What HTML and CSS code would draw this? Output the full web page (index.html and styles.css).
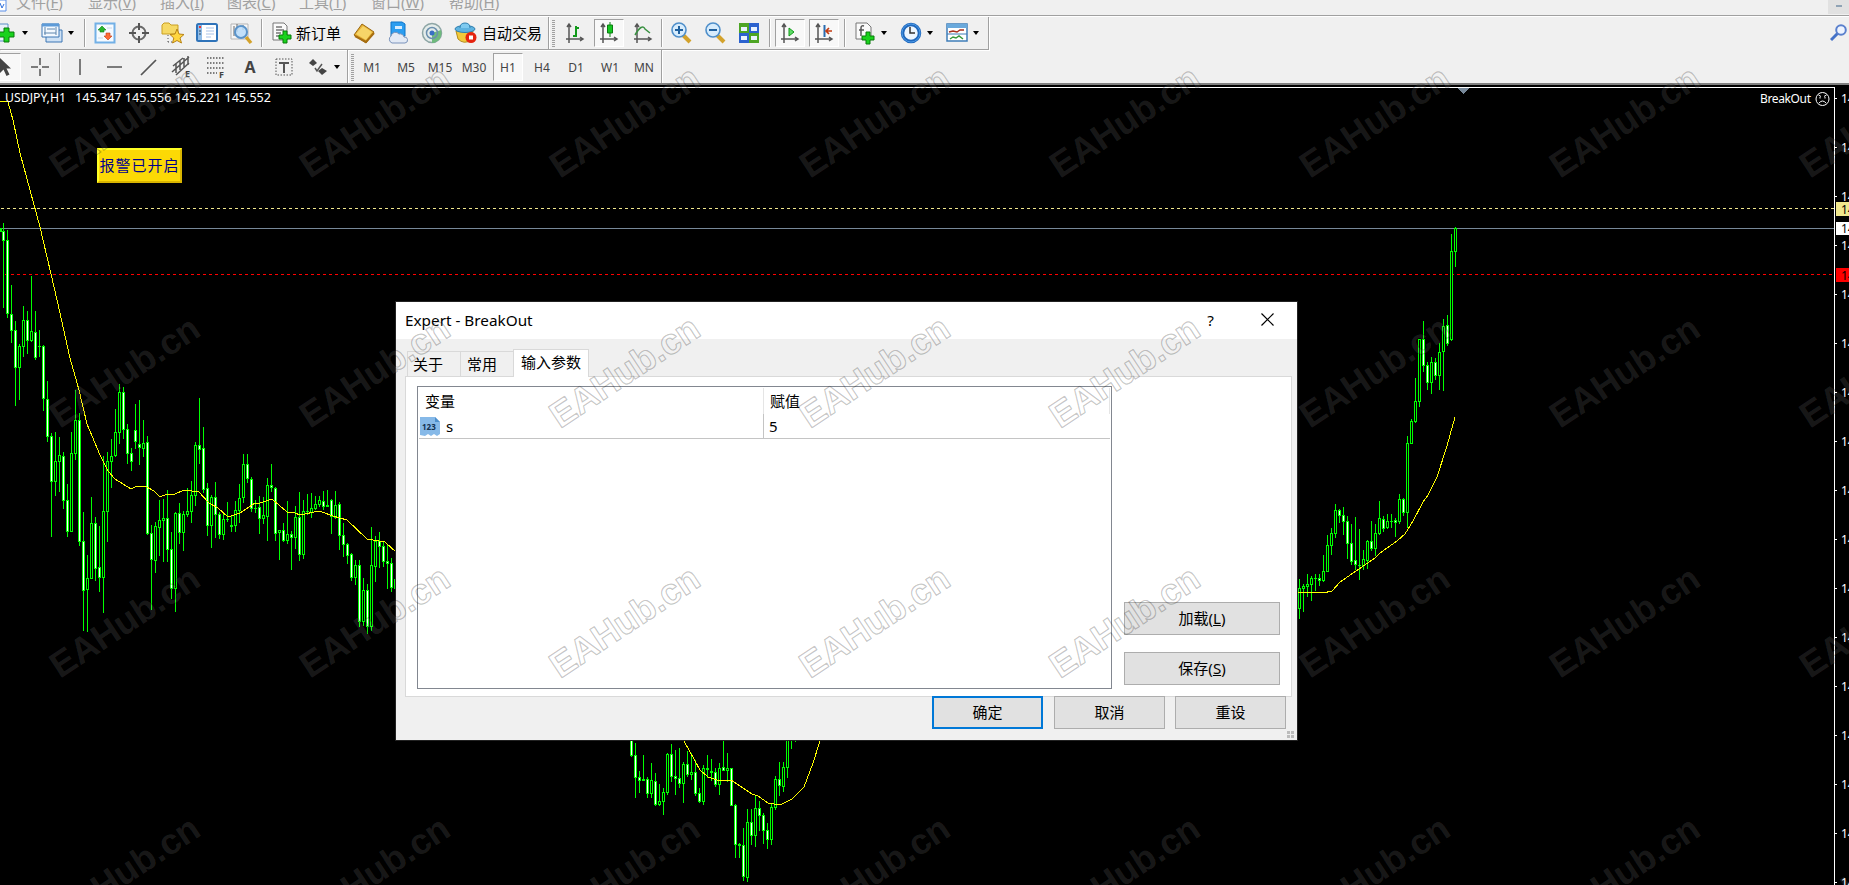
FILE: index.html
```html
<!DOCTYPE html>
<html lang="zh-CN">
<head>
	<meta charset="UTF-8">
	<title>USDJPY,H1</title>
	<link rel="stylesheet" href="styles.css">
</head>
<body>
	<div class="menu">
		<svg class="menu-logo" width="7" height="12" viewBox="0 0 7 12"><path d="M0 0h6v11H0" fill="#fff" stroke="#5b8fe8"/><path d="M0 3l2 5 2-4" fill="none" stroke="#2f6fdc"/></svg>
		<span>文件(<u>F</u>)</span>
		<span>显示(<u>V</u>)</span>
		<span class="short">插入(<u>I</u>)</span>
		<span>图表(<u>C</u>)</span>
		<span>工具(<u>T</u>)</span>
		<span class="long">窗口(<u>W</u>)</span>
		<span>帮助(<u>H</u>)</span>
		<div class="min"></div>
	</div>

	<div class="bar">
		<div class="group">
			<div class="btn first"><svg width="22" height="22"><path d="M0 2h13v17H0z" fill="#e8f1fa" stroke="#5b8fc4"/><path d="M9 6h5v4h5v5h-5v5H9v-5H4v-5h5z" fill="#19d21c" stroke="#087a0a"/></svg></div>
			<i class="dd"></i>
			<div class="btn"><svg width="22" height="22"><path d="M5 8h16v12H5z" fill="#cfe2f5" stroke="#3c76b4"/><path d="M1 2h17v13H1z" fill="#f3f9ff" stroke="#3c76b4"/><path d="M1 3h17" stroke="#5d9bd8" stroke-width="3"/><path d="M4 5v8M15 5v8M3 11h12M6 7h8" stroke="#5f86ad" fill="none"/></svg></div>
			<i class="dd"></i>
			<i class="sep"></i>
			<div class="btn"><svg width="22" height="22"><path d="M1.500 1.500h19v19h-19z" fill="#f5faff" stroke="#72b0e6" stroke-width="2"/><path d="M8 4l4 4h-2v2H6V8H4z" fill="#26b52b" stroke="#11821a" stroke-width=".6"/><path d="M14 18l4-4h-2v-3h-4v3h-2z" fill="#ff6b35" stroke="#c03a10" stroke-width=".6"/><path d="M4 16h5M13 6h5" stroke="#c9d9e8"/></svg></div>
			<div class="btn"><svg width="22" height="22"><circle cx="11" cy="11" r="6.500" fill="none" stroke="#6a6a6a" stroke-width="2"/><path d="M11 1v7M11 14v7M1 11h7M14 11h7" stroke="#555" stroke-width="2"/></svg></div>
			<div class="btn"><svg width="24" height="22"><path d="M1 3l2-2h5l2 2h7v9H1z" fill="#f6d965" stroke="#c99f22"/><path d="M7 13v8M7 20h5" stroke="#555" stroke-dasharray="1 2"/><path d="M16 7l2 5 5 .5-4 3.500 1.500 5L16 18.500 11.500 21l1.300-5L9 12.500l5-.5z" fill="#ffd640" stroke="#b88316"/></svg></div>
			<div class="btn"><svg width="22" height="20"><rect x="1" y="1" width="20" height="17" rx="1.500" fill="#fff" stroke="#2f73b9" stroke-width="2"/><path d="M2 2h4v15H2z" fill="#8fbce8"/><path d="M10 5h8M10 8h8M10 11h8M10 14h5" stroke="#a9c3e8"/><path d="M3 4h2" stroke="#e33" stroke-width="2"/><path d="M3 8h2M3 11h2" stroke="#345"/></svg></div>
			<div class="btn"><svg width="23" height="23"><path d="M1 2h17v15H1z" fill="#f7f7f7" stroke="#b5b5b5"/><path d="M4 4v10M7 2v8M13 3v5" stroke="#666"/><circle cx="11" cy="10" r="6" fill="#b9dcfa" fill-opacity=".85" stroke="#5a93c9" stroke-width="2"/><path d="M16 15l5 6" stroke="#d3a22b" stroke-width="3.500"/></svg></div>
			<i class="sep"></i>
			<div class="btn"><svg width="22" height="24"><path d="M2 2h11l3 3v14H2z" fill="#fafafa" stroke="#777"/><path d="M5 6h6M5 9h8M5 12h5M5 15h5" stroke="#777" stroke-width="1.500"/><path d="M12 10h4v4h4v4h-4v4h-4v-4H8v-4h4z" fill="#19d21c" stroke="#087a0a"/></svg></div>
			<span class="label order">新订单</span>
			<div class="btn"><svg width="22" height="22"><path d="M1 13L9 2l12 8-8 11z" fill="#e6b034" stroke="#9a6710"/><path d="M3 12l7-8 9 6-6 8z" fill="#f6d468"/><path d="M2 14l11 6 8-9" fill="none" stroke="#a76e11" stroke-width="2"/></svg></div>
			<div class="btn"><svg width="22" height="24"><path d="M4 1h11l3 2v12H4z" fill="#2b9df0" stroke="#0f74c8"/><path d="M8 5h7v3H8z" fill="#d5ecff"/><path d="M5 22a4 4 0 0 1-1-7 4.500 4.500 0 0 1 8-2 4 4 0 0 1 5 3 3 3 0 0 1 1 6z" fill="#e3eaf5" stroke="#7a93bb"/></svg></div>
			<div class="btn"><svg width="23" height="22"><circle cx="11" cy="11" r="9.500" fill="#e4ecea" stroke="#8da5a5" stroke-width="1.500"/><path d="M11 11v10a10 10 0 0 0 9-13z" fill="#6fba7d"/><circle cx="11" cy="11" r="5.500" fill="none" stroke="#6b8fae" stroke-width="1.500"/><circle cx="11" cy="11" r="2.500" fill="#3a6fc4"/></svg></div>
			<div class="btn"><svg width="24" height="22"><path d="M2 9h17l-2 9q-7 5-13-1z" fill="#f1c93b" stroke="#b58a17"/><ellipse cx="11" cy="7" rx="10" ry="3.500" fill="#5eb3e0" stroke="#2f7fb0"/><path d="M6 6q0-5 5-5t5 5" fill="#7ecaf0" stroke="#2f7fb0"/><circle cx="17" cy="15.500" r="5.500" fill="#e5230f"/><path d="M15 13.500h4v4h-4z" fill="#fff"/></svg></div>
			<span class="label auto">自动交易</span>
		</div>
		<div class="group">
			<i class="grip"></i>
			<div class="btn"><svg width="20" height="22"><g fill="none" stroke="#555" stroke-width="1.500"><path d="M4 3v18M1 17h16M2 5l2-3 2 3M15 15l3 2-3 2"/></g><path d="M8 14h3V4M11 6h3" fill="none" stroke="#129a1b" stroke-width="2"/></svg></div>
			<div class="btn on"><svg width="20" height="22"><g fill="none" stroke="#555" stroke-width="1.500"><path d="M4 3v18M1 17h16M2 5l2-3 2 3M15 15l3 2-3 2"/></g><path d="M11 0v15" stroke="#0a7c12"/><path d="M8.500 3h5v8h-5z" fill="#16c721" stroke="#0a7c12"/></svg></div>
			<div class="btn"><svg width="20" height="22"><g fill="none" stroke="#555" stroke-width="1.500"><path d="M4 3v18M1 17h16M2 5l2-3 2 3M15 15l3 2-3 2"/></g><path d="M2 13q7-12 10-6l5 4" fill="none" stroke="#3a9142" stroke-width="1.500"/></svg></div>
			<i class="sep tight"></i>
			<div class="btn"><svg width="22" height="22"><path d="M13 13l7 7" stroke="#d3a22b" stroke-width="4"/><circle cx="9" cy="8" r="7" fill="#d7ecfc" stroke="#4f8fca" stroke-width="1.600"/><path d="M5 8h8M9 4v8" stroke="#20619f" stroke-width="2"/></svg></div>
			<div class="btn"><svg width="22" height="22"><path d="M13 13l7 7" stroke="#d3a22b" stroke-width="4"/><circle cx="9" cy="8" r="7" fill="#d7ecfc" stroke="#4f8fca" stroke-width="1.600"/><path d="M5 8h8" stroke="#20619f" stroke-width="2"/></svg></div>
			<div class="btn"><svg width="22" height="22"><path d="M1 1h10v10H1zM11 11h10v10H11z" fill="#4da524"/><path d="M11 1h10v10H11zM1 11h10v10H1z" fill="#2c62cf"/><path d="M3 5h6v4H3zM13 5h6v4h-6zM3 14h6v4H3zM13 14h6v4h-6z" fill="#e9f3ff"/></svg></div>
			<i class="sep"></i>
			<div class="btn on"><svg width="20" height="22"><g fill="none" stroke="#555" stroke-width="1.500"><path d="M4 3v18M1 17h16M2 5l2-3 2 3M15 15l3 2-3 2"/></g><path d="M9 6l5 4-5 4z" fill="#5fdc67" stroke="#129a1b"/></svg></div>
			<div class="btn on"><svg width="20" height="22"><g fill="none" stroke="#555" stroke-width="1.500"><path d="M4 3v18M1 17h16M2 5l2-3 2 3M15 15l3 2-3 2"/></g><path d="M10.500 3v12" stroke="#2a6db0" stroke-width="2"/><path d="M18 9h-6M15 6l-3 3 3 3" fill="none" stroke="#c23b12" stroke-width="1.700"/></svg></div>
			<i class="sep"></i>
			<div class="btn"><svg width="22" height="24"><path d="M2 2h11l4 4v12H2z" fill="#fafafa" stroke="#777"/><path d="M10 5q-3-1-3 2v8M5 9h5" fill="none" stroke="#555" stroke-width="1.500"/><path d="M12 11h4v4h4v4h-4v4h-4v-4H8v-4h4z" fill="#19d21c" stroke="#087a0a"/></svg></div>
			<i class="dd"></i>
			<div class="btn"><svg width="22" height="22"><circle cx="11" cy="11" r="8.500" fill="#edf6ff" stroke="#1f68bd" stroke-width="3.500"/><circle cx="11" cy="11" r="9" fill="none" stroke="#4d9be8"/><path d="M10 5v6h5" fill="none" stroke="#333" stroke-width="1.500"/></svg></div>
			<i class="dd"></i>
			<div class="btn"><svg width="22" height="20"><path d="M1 1h20v17H1z" fill="#fff" stroke="#3f7db8" stroke-width="1.500"/><path d="M1 1h20v4H1z" fill="#6aa9dc"/><path d="M1 11h20" stroke="#3f7db8"/><path d="M3 9l4-1 4 1 3-2h4" fill="none" stroke="#a8301c" stroke-width="1.500"/><path d="M4 16l3-2 3 1 3-2 4 3" fill="none" stroke="#35983a" stroke-width="1.500"/></svg></div>
			<i class="dd last"></i>
		</div>
		<svg class="search" width="17" height="18"><path d="M1 16l7-7" stroke="#4472c8" stroke-width="3"/><circle cx="11" cy="6" r="4.800" fill="#eef4ff" stroke="#5a80cd" stroke-width="2"/></svg>
	</div>

	<div class="bar bar2">
		<div class="group">
			<div class="btn on cursor"><svg width="14" height="20"><path d="M3 1v15l3.500-3.500 3 6.500 3-1.500-3-6H14z" fill="#444"/></svg></div>
			<div class="btn cross"><svg width="20" height="20"><path d="M10 1v7M10 12v7M1 10h7M12 10h7" stroke="#555" stroke-width="1.500"/></svg></div>
			<i class="sep near"></i>
			<div class="btn"><svg width="20" height="20"><path d="M10 2v16" stroke="#555" stroke-width="1.500"/></svg></div>
			<div class="btn"><svg width="20" height="20"><path d="M3 10h15" stroke="#555" stroke-width="1.500"/></svg></div>
			<div class="btn"><svg width="20" height="20"><path d="M3 18L18 3" stroke="#555" stroke-width="1.700"/></svg></div>
			<div class="btn"><svg width="22" height="24"><path d="M1 17L18 2M2 11l10-8M5 20l13-12M5 8v10M9 6v9M13 3v9M17 1v9" stroke="#555" stroke-width="1.500"/><text x="14" y="22" class="tiny">E</text></svg></div>
			<div class="btn"><svg width="20" height="24"><path d="M1 3h18M1 8h18M1 13h18M1 18h10" stroke="#555" stroke-width="1.400" stroke-dasharray="1.500 1.500"/><text x="13" y="23" class="tiny">F</text></svg></div>
			<div class="btn letter">A</div>
			<div class="btn"><svg width="20" height="20"><path d="M2 2h16v16H2z" fill="none" stroke="#555" stroke-dasharray="1.500 1.500"/><path d="M5 6h10M10 6v10" stroke="#555" stroke-width="2"/></svg></div>
			<div class="btn"><svg width="20" height="20"><path d="M5 2l4 4-4 3-4-3zM14 11l5 3-5 4-4-4z" fill="#444"/><path d="M7 11l2 3 5-7" fill="none" stroke="#555" stroke-width="1.500"/></svg></div>
			<i class="dd"></i>
		</div>
		<div class="group periods">
			<i class="grip"></i>
			<span class="btn">M1</span>
			<span class="btn">M5</span>
			<span class="btn">M15</span>
			<span class="btn">M30</span>
			<span class="btn on">H1</span>
			<span class="btn">H4</span>
			<span class="btn">D1</span>
			<span class="btn">W1</span>
			<span class="btn">MN</span>
		</div>
	</div>

	<div class="chart">
		<svg id="chart" width="1849" height="800" viewBox="0 85 1849 800"></svg>
		<div class="alarm">报警已开启</div>
	</div>

	<div class="dialog">
		<div class="title">
			<span>Expert - BreakOut</span>
			<span class="help">?</span>
			<svg width="13" height="13"><path d="M.5.500l12 12M12.500.500l-12 12" stroke="#000" stroke-width="1.200"/></svg>
		</div>
		<div class="tabs">
			<span>关于</span>
			<span>常用</span>
			<span class="active">输入参数</span>
		</div>
		<div class="panel">
			<div class="list">
				<div class="row head">
					<span class="name">变量</span>
					<span class="value">赋值</span>
				</div>
				<div class="row">
					<span class="name"><svg width="21" height="21"><path d="M0 1h15l5 5v12l-3 2-3-2-3 2-3-2-3 2-5-1z" fill="#86b9e8"/><path d="M15 1v5h5z" fill="#4d8fcc"/><text x="2" y="14" class="num">123</text></svg>s</span>
					<span class="value">5</span>
				</div>
			</div>
			<div class="side">
				<div class="button">加载(<u>L</u>)</div>
				<div class="button">保存(<u>S</u>)</div>
			</div>
		</div>
		<div class="foot">
			<div class="button ok">确定</div>
			<div class="button">取消</div>
			<div class="button">重设</div>
		</div>
		<svg class="size" width="7" height="7"><path d="M0 0h3v3H0zM4 0h3v3H4zM0 4h3v3H0zM4 4h3v3H4z" fill="#bcbcbc"/></svg>
	</div>

	<svg id="mark" class="mark" width="1849" height="885"></svg>

	<script src="script.js"></script>
</body>
</html>
```
FILE: styles.css
```css
body{
	margin:0;
	width:1849px;
	height:885px;
	overflow:hidden;
	position:relative;
	background:#f0f0f0;
	font-family:"Noto Sans","Noto Sans CJK SC",sans-serif;
}
.menu{
	display:flex;
	height:15px;
	overflow:hidden;
	border-bottom:1px solid #a0a0a0;
	box-shadow:0 1px #fff;
	color:#a0a0a0;
	font-size:15px;
	line-height:20px;
}
.menu span{
	width:72px;
	height:20px;
	margin-top:-8px;
	white-space:nowrap;
}
.menu .short{
	width:67px;
}
.menu .long{
	width:78px;
}
.menu-logo{
	margin-right:9px;
}
.min{
	width:21px;
	height:14px;
	margin-left:auto;
	background:#e1e1e1;
}
.min:after{
	content:'';
	display:block;
	width:6px;
	height:2px;
	margin:5px 0 0 8px;
	background:#8fa3b5;
}
.bar{
	display:flex;
	height:34px;
	position:relative;
}
.group{
	display:flex;
	align-items:center;
	height:33px;
	margin-top:1px;
	box-sizing:border-box;
	border-right:1px solid #a0a0a0;
	border-bottom:1px solid #a0a0a0;
	box-shadow:1px 1px #fff;
}
.bar2{
	height:35px;
	box-sizing:border-box;
	border-bottom:2px solid #808080;
}
.bar2 .group{
	border-bottom:none;
	height:33px;
	margin-top:0;
	padding-top:1px;
	box-shadow:1px 0 #fff;
}
.btn{
	flex:none;
	display:flex;
	align-items:center;
	justify-content:center;
	width:34px;
	height:28px;
}
.btn.on{
	width:30px;
	margin:0 2px;
	box-sizing:border-box;
	border:1px solid #fff;
	border-top-color:#a0a0a0;
	border-left-color:#a0a0a0;
	background:#f8f8f8;
}
.btn.first{
	margin-left:-11px;
}
.btn.cursor{
	width:34px;
	margin:0 2px 0 -13px;
}
.dd{
	width:0;
	margin:0 7px 0 -1px;
	border:3.5px solid transparent;
	border-top:4px solid #000;
	border-bottom:0;
}
.dd.last{
	margin-right:9px;
}
.sep{
	width:1px;
	height:28px;
	margin:0 3px;
	background:#a0a0a0;
	box-shadow:1px 0 #fff;
}
.sep.tight{
	margin:0 2px 0 1px;
}
.sep.near{
	margin:0 3px 0 2px;
}
.grip{
	width:3px;
	height:27px;
	margin:0 3px;
	background:repeating-linear-gradient(#a0a0a0 0 1px,#f0f0f0 1px 2px);
}
.periods .grip{
	margin-right:1px;
}
.label{
	font-size:15px;
	line-height:22px;
	white-space:nowrap;
}
.order{
	width:51px;
	margin-left:-3px;
}
.auto{
	width:66px;
	margin-left:-1px;
}
.periods,.letter{
	font-size:12px;
	color:#444;
}
.letter{
	font-size:16px;
	font-weight:bold;
}
.tiny{
	font:bold 9px "Noto Sans",sans-serif;
	fill:#444;
}
.search{
	position:absolute;
	right:2px;
	top:8px;
}
.chart{
	position:relative;
	height:800px;
	background:#000;
}
.chart svg{
	display:block;
}
.txt{
	font:12px "Noto Sans",sans-serif;
	fill:#fff;
}
.txt.dark{
	fill:#000;
}
.alarm{
	position:absolute;
	left:97px;
	top:63px;
	width:85px;
	height:35px;
	box-sizing:border-box;
	border:2px solid #d9b500;
	border-top-color:#ffff24;
	border-left-color:#ffff24;
	background:#fcd905;
	color:#00008b;
	font-family:"Noto Sans CJK SC",sans-serif;
	font-size:15px;
	letter-spacing:1px;
	line-height:29px;
	text-align:center;
	white-space:nowrap;
}
.dialog{
	position:absolute;
	left:396px;
	top:302px;
	width:901px;
	height:438px;
	background:#f0f0f0;
	box-shadow:0 0 0 1px #222;
	font-size:15px;
}
.title{
	display:flex;
	align-items:center;
	box-sizing:border-box;
	height:37px;
	padding:0 23px 2px 9px;
	background:#fff;
	font-size:15.300px;
}
.help{
	margin:0 47px 0 auto;
}
.tabs{
	display:flex;
	align-items:flex-end;
	height:37px;
	padding-left:11px;
}
.tabs span{
	box-sizing:border-box;
	width:53px;
	height:25px;
	padding-left:5px;
	border:1px solid #d9d9d9;
	border-width:1px 0 0 1px;
	line-height:24px;
}
.tabs span:nth-child(2){
	padding-left:6px;
}
.tabs span.active{
	width:76px;
	height:28px;
	margin-bottom:-1px;
	padding-left:7px;
	border-width:1px 1px 0 1px;
	background:#fff;
	position:relative;
	line-height:24px;
}
.panel{
	display:flex;
	box-sizing:border-box;
	width:887px;
	height:321px;
	margin-left:9px;
	padding:9px 10px 7px 11px;
	border:1px solid #d9d9d9;
	background:#fff;
}
.list{
	box-sizing:border-box;
	width:695px;
	height:303px;
	border:1px solid #828790;
	padding:1px 1px 0;
}
.row{
	display:flex;
	height:24px;
	border-bottom:1px solid #c4c4c4;
	line-height:24px;
}
.row.head{
	height:26px;
	border-bottom:none;
	line-height:27px;
	border-right:1px solid #e5e5e5;
}
.name{
	display:flex;
	width:344px;
	border-right:1px solid #c4c4c4;
}
.head .name{
	box-sizing:border-box;
	width:345px;
	padding-left:6px;
	border-color:#e5e5e5;
}
.name svg{
	margin:2px 5px 0 1px;
}
.num{
	font:bold 8px "Noto Sans",sans-serif;
	fill:#12304f;
}
.value{
	padding-left:5px;
}
.head .value{
	padding-left:6px;
}
.side{
	display:flex;
	flex-direction:column;
	justify-content:flex-end;
	gap:17px;
	margin-left:12px;
	padding-bottom:4px;
}
.button{
	box-sizing:border-box;
	width:156px;
	height:33px;
	border:1px solid #adadad;
	background:#e1e1e1;
	line-height:31px;
	text-align:center;
}
.foot{
	display:flex;
	justify-content:flex-end;
	gap:10px;
	margin:-1px 11px 0 0;
}
.foot .button{
	width:111px;
}
.foot .ok{
	margin-right:1px;
	border:2px solid #0078d7;
	line-height:29px;
}
.size{
	position:absolute;
	right:3px;
	bottom:2px;
}
.mark{
	position:absolute;
	left:0;
	top:0;
	pointer-events:none;
}
.mark text{
	font:bold 36px "Liberation Sans",sans-serif;
	fill:rgba(255,255,255,.11);
	stroke:rgba(0,0,0,.24);
	stroke-width:1.2px;
	stroke-linejoin:round;
	paint-order:stroke;
}
```
FILE: script.js
```js
// high, low, body top, body bottom, 1 = falling
var left = [
	[223,308,231,241,1],[230,318,240,314,1],[285,343,314,331,1],[321,406,330,368,1],[344,400,346,368,0],[306,357,320,347,0],[311,354,320,341,1],[276,342,331,341,0],
	[311,360,332,358,1],[330,357,346,347,0],[345,411,346,399,1],[381,442,399,437,1],[433,537,436,482,1],[432,496,461,482,0],[437,492,455,462,0],[452,509,456,501,1],
	[484,537,500,532,1],[432,532,453,532,0],[390,460,420,454,0],[413,546,420,542,1],[512,631,541,591,1],[555,632,578,590,0],[497,579,523,579,0],[517,581,523,569,1],
	[526,592,567,578,1],[456,613,511,578,0],[452,542,461,512,0],[439,488,456,462,0],[409,457,432,456,0],[384,444,392,433,0],[387,439,392,430,1],[424,464,429,454,1],
	[448,471,453,462,1],[404,449,430,442,1],[400,465,444,448,1],[420,457,443,449,0],[436,535,442,534,1],[525,610,533,560,1],[522,573,526,561,0],[500,556,520,528,0],
	[499,562,518,521,0],[490,562,518,550,1],[532,599,549,589,1],[512,612,513,589,0],[503,544,513,533,1],[511,551,514,533,0],[488,517,511,515,0],[481,523,495,512,0],
	[442,506,445,496,0],[398,464,445,450,1],[427,493,448,490,1],[483,536,488,526,1],[495,548,497,526,0],[482,538,497,515,1],[512,539,514,535,1],[514,540,519,535,0],
	[502,522,519,520,0],[516,532,525,527,0],[501,532,510,526,0],[484,523,498,511,0],[454,503,464,498,0],[454,483,464,479,1],[477,512,479,509,1],[500,513,508,509,0],
	[496,534,507,519,1],[497,524,515,519,0],[478,541,485,517,0],[464,492,485,488,1],[487,541,488,534,1],[530,560,530,533,0],[523,542,530,541,1],[501,544,534,541,0],
	[531,570,534,538,1],[506,549,517,538,0],[492,561,517,555,1],[500,559,511,555,0],[494,515,511,512,0],[493,518,508,513,0],[496,510,504,509,0],[496,507,500,505,0],
	[491,510,501,507,1],[490,507,505,507,0],[499,534,500,517,1],[491,519,505,518,0],[502,550,504,536,1],[523,557,535,545,1],[543,564,544,556,1],[553,581,554,578,1],
	[560,585,565,578,0],[560,627,565,622,1],[578,626,590,622,0],[584,634,590,627,1],[527,631,565,627,0],[536,582,541,567,0],[532,568,541,547,1],[542,567,546,562,1],
	[545,589,561,564,1],[558,592,563,588,1],[556,602,579,589,0]
];
var middle = [
	[730,757,730,756,1],[743,798,755,778,1],[771,793,777,781,1],[755,781,779,781,0],[777,798,779,794,1],[763,798,780,794,0],[773,806,781,805,1],[784,806,801,805,0],
	[788,815,792,802,0],[753,795,754,793,0],[744,782,754,777,1],[750,795,776,779,1],[748,788,778,784,1],[762,803,764,784,0],[751,777,764,775,1],[753,780,772,775,0],
	[760,796,772,794,1],[788,803,793,802,1],[765,805,768,802,0],[755,778,768,770,0],[759,781,771,773,1],[768,787,772,785,1],[763,795,768,785,0],[735,771,767,771,1],
	[753,782,768,771,0],[768,806,768,806,1],[804,858,805,845,1],[843,858,844,846,0],[828,881,845,877,1],[809,882,822,878,0],[809,845,822,836,1],[795,847,808,836,0],
	[801,831,808,816,1],[813,844,815,831,1],[823,849,830,840,1],[803,845,807,840,0],[776,810,779,808,0],[762,796,779,786,1],[762,792,767,787,0],[735,778,735,768,0],
	[735,749,735,741,0],[735,742,735,740,0]
];
var right = [
	[579,619,588,609,0],[584,612,586,589,0],[574,597,584,587,0],[576,601,578,585,0],[574,591,578,579,0],[574,586,578,581,1],[555,582,571,581,0],[535,572,545,572,0],
	[528,555,533,546,0],[504,538,510,534,0],[509,523,510,516,1],[507,535,515,522,1],[516,559,521,544,1],[524,565,543,562,1],[517,570,560,565,1],[529,580,565,566,0],
	[550,570,559,566,0],[540,569,541,561,0],[521,551,541,549,1],[524,556,533,549,0],[501,535,518,534,0],[516,532,519,529,1],[514,529,521,528,0],[514,528,521,522,0],
	[518,537,520,523,1],[494,524,499,522,0],[498,516,499,513,1],[436,528,443,513,0],[419,444,421,444,0],[378,423,401,422,0],[339,407,339,402,0],[321,372,339,366,1],
	[362,390,365,383,1],[357,394,362,383,0],[358,380,362,376,1],[343,390,352,376,0],[319,391,326,352,0],[315,346,325,344,1],[234,341,251,340,0],[227,267,228,252,0]
];
var average = [
	'0,101 8,102 13,120 20,153 40,227 51,274 60,313 70,358 79,390 87,424 100,455 108,471 115,479 131,489 135,487 145,486 154,491 160,497 167,494 173,495 184,490 199,492 209,503 218,508 228,517 240,513 255,503 260,503 272,499 287,512 295,513 300,515 319,511 333,516 347,520 367,539 385,542 396,552',
	'684,741 700,770 708,777 717,780 731,780 752,794 758,796 768,803 780,805 792,799 804,787 813,763 820,741',
	'1297,592 1323,593 1332,591 1340,582 1359,569 1375,558 1380,553 1397,541 1405,534 1413,521 1423,502 1428,495 1437,477 1447,446 1455,417'
];

function rect(x, y, w, h, color) {
	return '<rect x="' + x + '" y="' + y + '" width="' + w + '" height="' + h + '" fill="' + color + '"/>';
}

function candles(list, x) {
	var out = '';
	for (var i=0; i<list.length; i++) {
		var c = list[i];
		out += rect(x, c[0], 1, c[1] - c[0], '#0f0');
		out += rect(x - 1, c[2], 3, c[3] - c[2], '#0f0');
		if (c[3] - c[2] > 2) {
			out += rect(x, c[2] + 1, 1, c[3] - c[2] - 2, c[4] ? '#fff' : '#000');
		}
		x += 4;
	}
	return out;
}

var html = '<g shape-rendering="crispEdges">';
html += rect(0, 87, 1835, 1, '#fff') + rect(1834, 87, 1, 798, '#fff');
html += '<path d="M1457 88h12l-6 6z" fill="#778899"/>';
html += '<path d="M1 208.5H1834" stroke="#f0e68c" stroke-dasharray="3 3"/>';
html += '<path d="M5 274.5H1834" stroke="#f00" stroke-dasharray="3 3"/>';
html += rect(0, 228, 1834, 1, '#778899') + rect(0, 228, 2, 4, '#0f0');
html += candles(left, 3) + candles(middle, 631) + candles(right, 1299);
for (var i=0; i<average.length; i++) {
	html += '<polyline points="' + average[i] + '" fill="none" stroke="#ff0"/>';
}
for (var y=98; y<885; y+=49) {
	html += rect(1835, y, 2, 1, '#fff');
}
html += '</g>';

//价格坐标
for (var y=98; y<885; y+=49) {
	html += '<text class="txt" x="1841" y="' + (y + 5) + '">14</text>';
}
html += rect(1836, 202, 13, 14, '#f0e68c') + rect(1836, 222, 13, 13, '#fff') + rect(1836, 268, 13, 14, '#f00');
html += '<text class="txt dark" x="1841" y="214">14</text>';
html += '<text class="txt dark" x="1841" y="233">14</text>';
html += '<text class="txt dark" x="1841" y="280">14</text>';

html += '<text class="txt" x="5" y="102" textLength="61" lengthAdjust="spacingAndGlyphs">USDJPY,H1</text>';
html += '<text class="txt" x="75" y="102" textLength="196" lengthAdjust="spacingAndGlyphs">145.347 145.556 145.221 145.552</text>';
html += '<text class="txt" x="1760" y="103" textLength="51">BreakOut</text>';
html += '<g fill="none" stroke="#fff"><circle cx="1822.500" cy="99" r="6.500"/><path d="M1819 103q3.500-4 7 0M1818.500 95l2.500 1.500M1826.500 95l-2.500 1.500M1820 97v1.500M1825 97v1.500"/></g>';
document.getElementById('chart').innerHTML = html;

//水印
var mark = '';
for (var my=179; my<1000; my+=250) {
	for (var mx=60; mx<1849; mx+=250) {
		mark += '<text transform="translate(' + mx + ' ' + my + ') rotate(-33.5)" textLength="171">EAHub.cn</text>';
	}
}
document.getElementById('mark').innerHTML = mark;
```
